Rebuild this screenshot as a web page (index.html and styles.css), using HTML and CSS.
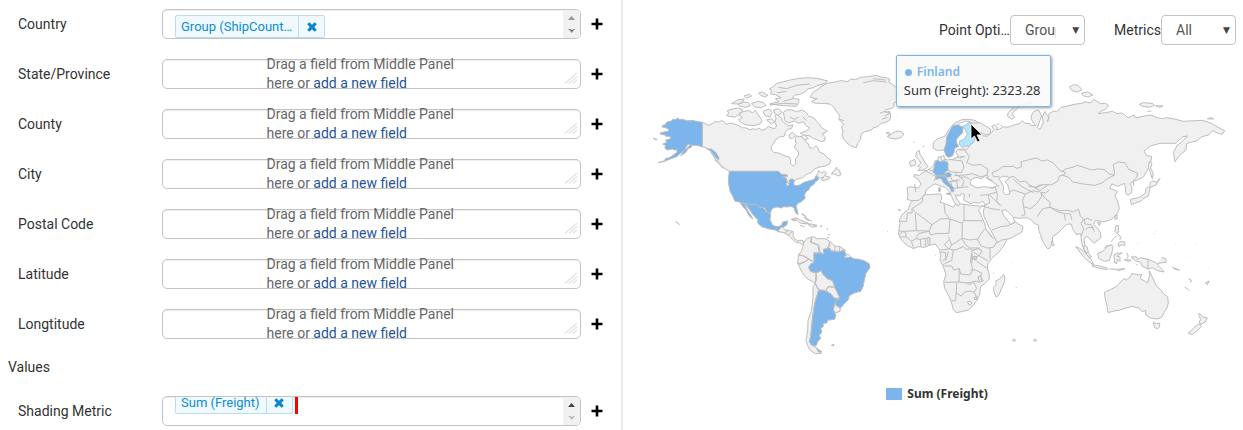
FILE: index.html
```html
<!DOCTYPE html>
<html lang="en">
<head>
<meta charset="utf-8">
<title>Map report</title>
<link rel="stylesheet" href="styles.css">
</head>
<body>
<svg class="defs" width="0" height="0" aria-hidden="true">
  <symbol id="plus" viewBox="0 0 12 12"><path d="M4.700.5h2.600v4.200h4.200v2.600H7.300v4.200H4.700V7.300H.5V4.700h4.200z"/></symbol>
  <symbol id="cross" viewBox="0 0 10 10"><path d="M2.300.3 5 2.800 7.700.3 9.800 2.300 7.200 5l2.600 2.700-2.100 2L5 7.200 2.300 9.700.2 7.700 2.800 5 .2 2.300z"/></symbol>
  <symbol id="grip" viewBox="0 0 14 13"><path d="M1 11.500 13 1M5 11.500 13 4.500M9 11.500l4-3.500" fill="none" stroke="#e2e2e2" stroke-width="1.300"/></symbol>
</svg>
<main class="layout">
  <section class="fields">
    <div class="row"><span class="name">Country</span>
      <div class="box tokens">
        <span class="token"><span class="token-text">Group (ShipCount…</span><button class="remove" aria-label="Remove"><svg><use href="#cross"/></svg></button></span>
        <span class="scroll"><svg viewBox="0 0 17 28"><path d="M5 10h7L8.500 6z" fill="#999"/><path d="M5 19h2l2 1 2-1h1l-3.500 4-1-2z" fill="#777"/></svg></span>
      </div>
      <button class="add" aria-label="Add Country"><svg><use href="#plus"/></svg></button></div>
    <div class="row"><span class="name">State/Province</span>
      <div class="box"><p class="hint">Drag a field from Middle Panel here or <a href="#">add a new field</a></p><svg class="grip"><use href="#grip"/></svg></div>
      <button class="add" aria-label="Add State/Province"><svg><use href="#plus"/></svg></button></div>
    <div class="row"><span class="name">County</span>
      <div class="box"><p class="hint">Drag a field from Middle Panel here or <a href="#">add a new field</a></p><svg class="grip"><use href="#grip"/></svg></div>
      <button class="add" aria-label="Add County"><svg><use href="#plus"/></svg></button></div>
    <div class="row"><span class="name">City</span>
      <div class="box"><p class="hint">Drag a field from Middle Panel here or <a href="#">add a new field</a></p><svg class="grip"><use href="#grip"/></svg></div>
      <button class="add" aria-label="Add City"><svg><use href="#plus"/></svg></button></div>
    <div class="row"><span class="name">Postal Code</span>
      <div class="box"><p class="hint">Drag a field from Middle Panel here or <a href="#">add a new field</a></p><svg class="grip"><use href="#grip"/></svg></div>
      <button class="add" aria-label="Add Postal Code"><svg><use href="#plus"/></svg></button></div>
    <div class="row"><span class="name">Latitude</span>
      <div class="box"><p class="hint">Drag a field from Middle Panel here or <a href="#">add a new field</a></p><svg class="grip"><use href="#grip"/></svg></div>
      <button class="add" aria-label="Add Latitude"><svg><use href="#plus"/></svg></button></div>
    <div class="row"><span class="name">Longtitude</span>
      <div class="box"><p class="hint">Drag a field from Middle Panel here or <a href="#">add a new field</a></p><svg class="grip"><use href="#grip"/></svg></div>
      <button class="add" aria-label="Add Longtitude"><svg><use href="#plus"/></svg></button></div>
    <h2 class="group">Values</h2>
    <div class="row"><span class="name">Shading Metric</span>
      <div class="box tokens scrolled">
        <span class="token"><span class="token-text">Sum (Freight)</span><button class="remove" aria-label="Remove"><svg><use href="#cross"/></svg></button></span><i class="drop-mark"></i>
        <span class="scroll"><svg viewBox="0 0 17 28"><path d="M5 10h7L8.500 6z" fill="#444"/><path d="M5 19h2l2 1 2-1h1l-3.500 4-1-2z" fill="#b5b5b5"/></svg></span>
      </div>
      <button class="add" aria-label="Add Shading Metric"><svg><use href="#plus"/></svg></button></div>
  </section>

  <section class="chart">
    <div class="toolbar">
      <div class="option"><label class="option-name" for="point">Point Option</label><span class="pick"><select id="point"><option>Group</option></select><i>▼</i></span></div>
      <div class="option"><label for="metrics">Metrics</label><span class="pick"><select id="metrics"><option>All</option></select><i>▼</i></span></div>
    </div>
    <div class="map-area">
    <svg class="map" viewBox="623 50 620 310" role="img" aria-label="World map">
      <!-- North America -->
      <g transform="translate(640 70) scale(.33333)">
        <path d="M187 157l9 4 10 5 12-6 7-5 12 1 6-4 9 3 6 8 13-4 11 3 12 4 13 7 12 1 10 5 12-3 6 3 9-5 10 7 12-5 7-7 8 4 12 3 5-9-5-9 3-12-3-9 6-7 6 9 8 5 2 9 8 7 12 8 12-3-4 10-11 3-8 9-4 12-14 2-11 8-6 12-8 9 2 10 6 7 14 2 12 5 9 4 12 3 4 8-1 11 9 8 8-7-2-15 8-8 2-10-8-12-6-5 7-10-4-12 4-11 15 2 13 5 1 12 8 5 2 10 12 3 8-8 7 8 3 11 14 6 9 10 12 9-5 11-14 7-15 2-16 6-9 11-14 5-12 10-16 4-20 13L450 345 430 322 415 304H268l-11-7-13-9-10-15-7-13-13-15-14-11-13-4z"/>
        <path class="hot" d="M187 157L170 154 155 151 140 152 128 148 119 149 113 144 106 149 96 149 91 155 83 155 77 160 79 163 68 166 66 171 77 173 86 178 86 183 62 188 60 192 75 195 77 199 90 199 92 206 81 209 76 212 81 217 68 222 78 227 74 234 82 240 98 237 104 241 110 236 111 247 99 256 88 263 76 266 74 272 55 278 74 274 91 267 112 259 121 250 134 239 144 223 151 223 142 235 131 241 122 257 135 249 147 234 154 233 155 226 172 226 187 231zM200 237l14 0 15 12 8 15-1 6-9-7-9-12-6-9z"/>
        <path class="hot" d="M268 304L415 304 425 313 438 314 444 318 430 321 439 325 441 332 440 348 447 346 448 330 456 326 463 331 461 341 464 348 479 345 492 337 508 332 523 328 528 317 534 319 535 330 526 335 522 343 511 350 507 359 497 366 493 376 496 384 486 394 474 400 468 408 472 422 474 434 467 429 462 413 453 409 443 411 431 410 425 414 412 411 399 414 393 422 391 431 380 425 374 413 361 412 350 404 325 404 303 397 284 393 279 380 271 366 267 348 265 328z"/>
        <path class="hot" d="M300 398l25 5 25 0 9 8 10 1 8 12 15 8-2 17 8 17 13 4 13-3 4-11 15-3-2 11-9 7-9 3-4 13-13-7-18-3-21-6-13-10-1-12-14-15-16-23-9-8 10 20 12 18 2 6-12-11-7-16-6-5z"/>
        <path d="M262 122l15-5 19-3 13 5-10 13-13 9-15-1-11-3 6-7zM300 128l25-7 13 8 8-9 8 14 12 17-5 10-18 6-22-2-16-6-9-10 12-6-9-6zM274 101l19-11 20-3-6 10-14 5zM295 103l16-7 13 1 7 10-15 5-18-4zM334 101l20-7 16 3 8 9-16 8-18-4zM312 78l17-5 6 5-16 7zM356 69l12-3 8 6 8 4-10 5-12-5zM372 122l16-5 9 11-7 13-13-3-7-9zM400 120l14-4 12 10-9 10-12-4zM380 150l15-4 9 10-10 6zM400 50l9-9 22-6 20-5 20-4 28-3 32 2 32 8-8 7-21 6-14 7-17 4-6 8-17 8-14 2-9 8 11 4 9 1-1 10-7 11-38-2-42-5 28-7-11-9 17-2-16-10-16-3 4-10-7-4zM430 127l10-7 14-1 15 6 18-5 13 9 6 10 14 3 10 12 8 8 7 12 17 9-6 5-10 3 10 10-3 12-8 2-15-6-10-4-13-8-19-1-7-7 19-7 9-8-13-9-5-10-15 5-13-7-18 6-10-7z"/>
        <path fill="none" d="M415 52l25 4 30-10 40-4M412 68l28-4M430 94l30-8M390 105l40-5 42 2M450 140l12 8 14-6M488 140l12 12"/>
        <path d="M484 200l10-6 11 12-13 3zM448 194l10-7 9 9-10 10-9-3zM536 302l9 7 8-5 7 5-7 8 18 5-4 4-15 6-8-2 8-9-14 4-8-9zM574 312l10-12 6-9 2 8 7 2 3 14-8 3-10-6zM40 205l12 3-5 2zM106 455l9 4 4 7M454 448l13-4 18 9 15 5 8 4-19-3-15-9zM486 431l8 4-1 8 11 8 12 1M511 462l20 4-5 4-15-2zM480 467l8 0M540 468l6 1M560 477l4 0M565 493l4 1M212 247l10 14 8 16M226 268l12 16 14 12"/>
      </g>
      <!-- Greenland and Iceland -->
      <g transform="translate(780 60) scale(.33333)">
        <path d="M92 108L100 96 111 90 123 80 141 70 161 67 183 62 203 65 212 57 226 59 243 52 263 50 288 46 303 51 318 53 330 58 326 66 338 74 346 80 374 78 361 87 369 95 353 101 358 113 352 124 340 131 343 139 333 146 318 149 316 157 329 154 332 166 330 180 317 187 304 190 293 200 279 204 273 211 254 215 244 222 241 239 233 250 229 263 214 259 201 249 192 238 186 225 189 213 184 201 192 193 183 185 176 177 180 168 171 156 162 143 152 133 135 130 108 130 94 125 112 116 92 113zM318 218l11 0 3 7 7-7 15-5 12 3 6 6-8 10-15 5-16-2-11-6 8-3z"/>
        <path fill="none" d="M250 68l30-6 40 4M280 56l36 4M300 160l14-6 16 6-16 8M306 178l16-6M178 178l14 4"/>
        <path d="M401 246l3 1M429 262l3-5M322 514l2 0M354 449l8 2"/>
      </g>
      <!-- South and Central America -->
      <g transform="translate(740 210) scale(.33333)">
        <path d="M119 56l8-6 8 10 12 1 13 4-1 12 5 10 10 6 12-3 7 7-8 7-6-5-12-3-10-8-9-11-14-8-20-5zM134 68l11-5M143 75l14-9M190 98l10-12 15-5-4 15 23 8 2 16 4 8-18 0 1 29-13-8-15-10-19-5 8-10 5-15zM215 82l8-2 6 6 26 0 13 7 2 12-8 11-12 2 2 16-12-6-3-22-24-8zM270 95l7 5 8 8 15 2 17 12-7-2-10 5-28-3-9-7zM285 108l0 16M300 110l-2 15M176 134l16 4 14 10-12 8-10 2-4 5-7-6zM172 157l8 6 14-7 12-8 17 10-11 5-6 9 6 12 16 5 2 17-4 14-26-15-14-18zM228 188l16-6 6 12 12 12 16 6 6 19-20-1-6 12-22-2-10-18zM264 230l20 2 6 12 9 14-7 8-10-2-8-11-16-12zM226 220l10 20-6 20-6 20-6 40-3 30-3 30-4 15 6 10 14 7 10 14 6 4-18 1-15-10-7-12-6-17 5-30 1-30 10-30 5-40 0-30zM282 284l10 4 9 8-1 8-12 4-8-7zM274 406l8-3-2 5z"/>
        <path class="hot" d="M222 128L230 131 240 127 252 134 250 118 262 116 270 114 272 122 285 125 300 125 311 121 318 131 316 144 330 140 342 146 357 148 372 152 388 161 390 173 378 190 373 210 370 228 362 244 345 248 328 257 325 269 311 283 302 294 291 287 282 279 296 268 300 261 296 257 290 243 284 231 278 212 262 206 250 194 244 182 228 188 212 184 206 172 212 162 222 158zM236 240L250 241 270 250 282 264 292 267 299 263 284 280 280 300 288 316 284 328 262 331 262 338 249 341 250 350 242 355 246 366 238 376 242 385 233 395 228 408 214 405 208 395 212 380 215 350 218 320 224 280 230 260zM230 414l16 12-11-1z"/>
        <path d="M312 142l12-10 8 8M156 30l15-5 22 11 8 6-21-3-8-7zM205 44l10-2 15 7-15 2zM187 50l7 0M184 13l12 4 1 6 9 6M240 49l6 0M261 56l3 1M264 72l2 4M261 84l7-2M443 63l1 1"/>
      </g>
      <!-- Africa -->
      <g transform="translate(890 180) scale(.33333)">
        <path d="M75 54L90 50 105 45 125 43 152 42 156 54 150 66 168 72 190 82 197 70 222 73 245 76 268 78 272 84 266 90 276 112 284 130 288 148 300 165 308 175 325 174 348 171 350 181 341 198 325 218 305 235 294 250 292 264 297 280 298 297 285 310 272 320 270 335 268 346 260 362 248 378 235 390 218 394 200 398 190 390 187 376 178 350 164 325 161 305 168 284 160 260 150 240 152 226 148 208 136 192 118 196 104 202 85 200 70 206 55 198 42 188 32 176 26 164 26 152 30 130 28 120 38 102 55 88 62 68zM312 335l-1-12 7-8 0-12 14-9 8-11 4 4 0 18-10 22-8 20-9 3z"/>
        <path fill="none" d="M98 50l0 15-14 9-18 12 0 13H52l-2 25H28M66 86l12 12 48 36 26-17 14-1 13 1-14-19-3-29M76 100l3 52-40 2-11 10M28 152l18 5 3 14-20 0M79 152l38 1 9-19M117 153l5 12 16-4 39-1 3-43 37 13-1 45-31 20-10-25M222 74v48l56 0M222 120l-6 10M216 175l24 5 24-3 7-13 14-18M262 177l10 20 20 7 18-2 14-20M290 150l18 22M216 176l10 18 14 10 30 0M185 195l-8 12 18 3 25-10 8 8 12-1 12 5M178 207l-27 3M177 207l-14-12 13-15M190 210l-5 32-20 8-8 8M152 217l15 0 0 15-8 12M175 215l-8 28M163 258l22 0 6 12 17-4 4 16 28 3 8-14-3-14 2-35M208 266l-1 40-44 1M207 306l23 3 10 5 15-11 13 4 12-5-10-13 6-9-19-10-16 0M241 250l5-38 18-6 12 7-8 14-17 5 9 12 33 22M252 217l22 14 20 12M300 205v32M200 309l-3 52-12 2M200 340l14 8 10-12 16-3 12 4 8-12-9-20-22 5M252 337l9 15-3 7M232 366l8-3 6 6-7 7zM252 353l6-2 2 6-6 2zM92 198l-1-20 15-3 0 24M108 175l12-3-1 24M113 174l1 21M91 178l-13-2-14 8 7 20M64 184l-15-13M78 176l8-16 30-6M246 230l14 0-1 8-13-1zM268 306l-4-15 8-5 3 18"/>
        <path d="M24 89l6 2 3-1M135 225l2 1M367 247l1 1M377 323l3 0M310 280l2 1"/>
      </g>
      <!-- Europe and Asia share one coastline -->
      <g transform="translate(960 70) scale(.33333)">
        <path d="M34 160l12-4 16 3 29 18 1 10-11 8-20-7 7 9 13 2 12-9 9-11-7-10 9-5 8 9-3 7 10-3 12-7 13 2 14-6 20-5 9-9 9 8 14 1 4 6 13 0-8-10-6-12 3-13 6-8 13-4 4 6 6 12-7 18-6 16 8 6 10-20-3-17 8-17 5 10 6 8-4 14 4-11 1-14 14-8 9 2 14-13 20-4 18-5 22-3 14-5 12 4 12-10 10 6 10 6 14-1 10 7-9 10-16 8-5 6 20-3 22-4 12 7 16-2 18 14 18-8 4 9 32-7 14-2 16 7 20 4 12-3 28 5 22 6 36-2 20-1 26 8 22 13 20 10-7 11-12-3-17-8-12 13-20 5-14 12-32 8-2 20-19 16-14 19-5-28 13-23 10-6 20-20-14 2-8 7-15 13-46 0-29 8-19 15 7 13 16 4-4 25-12 20-8 15-16 9-10 3-16 8 7 13-1 15-12 8-6-8-1-18-3-10-20 9-12-5-5-2-7 13 12 4 12 6-8 11 8 18 5 22-6 14-12 14-13 7-15 5-13-3-13-2-5 12 12 12 9 14 0 15-20 16-10-10-12-12-8 10 3 20 5 15 15 18-8 1-8-10-8-15-6-18-3-28-12 3-10-13-7-19-13 1-12 12-14 14-16 11 0 17-9 18-7 1-14-22-11-32-2-17-11-4-9-10-14-8-26 2-14-3-14-14-10-9-12 3 6 14 14 18 8 10 14-9 4 5 18 9-3 17-22 12-14 8-25 4-13 9-7-15-17-30-16-35-2-15 5-20-6-10-14 6-14-3-8 4-22-10 2-18-8-3-5 8-14-4 3 10 11 17-5 7-12-10-8-18-8-16-12-12-10-3-19-7-10 4-18 14-3 12-8 9-10 10-22 1-14-4 3-12-3-22 10-4 24 4 8-12-8-14-14-8 2-6 15 2 10-8 22-12 10-10 7-15 7 1 0-10 8-3 7 8 14 3 18-3 14-8-7-11 4-10 15-1 14 1 10-14 8-5 2-22-10-20z"/>
        <path fill="none" d="M-136 342l3 24M-75 272l0 14M-2 240l16 0 14 20-8 18 20 8 22-3 22 15-3 17-18 6-25-10-22 4-34 2M-34 268l40 5 6 18-8 17-28-2-16-8M12 258l-12 6M-10 262l24-2M-33 310l10 22 22-2M-3 318l16 16-8 20M-16 308l16 14 18-1 13 9M-50 320l16 16 25-4M-28 335l5 20 30-3M-10 330l3 26M-108 300l36 20-5 14M-96 298l24 8M10 352l15-2M82 315l3 12 10 3 8 15 15 3M115 300l12-10 33-1 11 6 14-5-2-14 24-7 24-5 13 9 18-3 17 8 21 24 16 5-2 7-16 4-4 15-20 12-14-1-20 1-15 8-16-8-14-12-16 3-17-16-12 1-12 12-10-5-12-8-15 0-5-12zM306 305l10-8 25-6 10-5 17 5 26 9 22-3 18 2 14 13 16 3-22 11-16 13-22 7-34-4-32-6-12-14-20-7M464 312l-4-28 15-8 20 2 11 20 27 12-3 12-9 10-1 16M106 352l6 22-2 20 12 12M145 368l15-8 36 12 22-10 18 4 12-10 20-14M160 328l26 22 34 18M196 372l-8 18 3 20 4 24-10 3M190 410l22 6 18-15 15-22-2-12 14 2 12-10M242 368l14 18 14 10 0 16-22 4-16 24M270 412l30 10 24-1 16 5M272 412l16 12 25 7 3 20M314 431l16 0 6 18M340 425l16-7 5 20 9 9-7 14 8 14-7 22M370 450l12-5 14 6M372 450l3 12 18 2 10 20M376 480l10-8 16 2M60 376l22-2 26-7M85 374l4 25-26 12M89 375l20 20 12 12M62 406l32 10 26 4M96 480l26-10 22-3 20-10-4-15M28 372l0 10M106 352l-14 3M205 348l25 5 16-8M225 354l15 8"/>
        <path class="sea" d="M30 343l4-15 14-6 17 4 8-7 7 6 16 9 17 13-15 6-27-3-20 4zM117 325l10-6 16 0 4 7-12 9 8 10 4 12 3 14-13 3-8-8 2-16z"/>
        <path d="M-130 246l8-5 2 13 8 10 9 18 8 7-14 11-17 2 8-10-9-4 10-9-8-11-8-8zM-152 276l16-8 4 16-16 5zM-80 218l11-11 23-8 12-19 16-20 24-11 22-1 20 4 6 7-16 0-20-6-20 8-20 15-11 24-6 26-10 14-19 2-13-8z"/>
        <path class="hot" d="M-5 165L9 172 8 188-2 198-11 208-10 218-4 229-16 235-18 248-22 257-32 262-41 259-48 240-42 222-40 200-28 178-20 166zM-75 280l7-9 9 4 13-3 10 6 0 22-10 8 5 8-18 3-13-2-9-12 3-13zM-72 320l13-6 17 8 6 14 16 16 2 12-7 2-6-13-18-14-9-14-14 3zM-48 312l15-5 8 7-9 8-16-2zM-63 352l4 2-1 12-4-3zM-42 370l14 0 0 4-10-1z"/>
        <path class="selected" d="M28 155l6 10-1 19 13 20-5 11-12 12-22 5-9-8 0-10 14-7 10-14-7-15-8-9 13-5z"/>
        <path d="M-58 262l9-6 4 12-9 5zM144 128l10-9 12-10 22-7 32-9-4 6-25 7-16 7-14 12-4 7 7 10-8 6-13-8zM328 52l12-8 14 2 12 13-14 7-16-4zM365 70l18-4 15 9-12 6-16-3zM538 103l12-5 28 2 5 6-15 6-20-3zM586 107l23 1-10 4zM562 124l12-1M742 146l14-3 5 4-15 0zM568 274l8 6-4 14 8 18-3 14-8-22-4-12zM570 339l8-6 12 4 10-12-12 20-18 8zM566 350l4 4-5 24-13 6-8 8-30 12-3-16 28-6 17-12 2-14zM467 435l5 6-7 8zM110 163l9-1M122 167l4 0M-190 140l1-1"/>
      </g>
      <!-- South-east Asia and Oceania -->
      <g transform="translate(1030 180) scale(.33333)">
        <path d="M223 337L241 329 259 320 271 307 281 296 290 299 300 292 305 281 315 282 325 285 335 283 331 296 344 303 353 309 358 290 358 272 366 290 373 304 379 318 392 329 400 341 413 351 415 369 411 384 402 398 396 411 382 417 361 414 348 405 346 391 337 395 325 384 307 379 285 385 267 391 252 393 234 398 231 379 226 357zM370 427l10 4 9-2 0 12-6 5-9-3zM508 399l10 12 14 3-6 12-14 8-4-8 4-8-6-12zM507 431l7 8-9 10-18 15-12-4 17-17zM137 200l12 5 16 12 18 22 8 14-8-3-17-14-15-18zM186 254l20 3 28 8-3 4-26-5-18-5zM163 197l8 3 4 16-7 4-7-16zM203 220l15-6 14-15 12-5 5 5-3 18-8 25-15 2-17-9zM224 204l6-7 14-1M252 225l7-5 18-1-17 9 10 3 0 14-8-8-2 14-7-3zM290 218l5 10-4 7M283 239l20 1-8 4zM303 231l16-1 4 9 8-6 22 5 25 10 10 12 12 12 2 4-19-4-16-9-13 4-17-8-5-12-16-5zM354 236v33M238 267l22 1 25-2-22 7M318 251l4 5M382 251l15-3 12-1-3-12-12-2M257 138l8-2 1 20-5 5-6-7zM262 160l12 12-5 8M265 190l8-6 12 3-1 10-8-3-10 5zM243 185l16-18M64 184l9 8-2 6-6-3zM202 126l10 2-4 9zM255 106l7 0-2 12-5-5zM428 262l20 8-14-2zM476 296l9 5-4 7M464 321l8 6 6 5M526 309l12-6-6 11zM-53 481l6-4 4 5-8 2zM10 481l6-4 4 5-8 2zM371 161l2 1M376 154l1 1M436 193l1 0M496 192l1 1M34 200l1 2M323 190l2 0M478 230l1 0M536 265l1 0"/>
      </g>
    </svg>
    <div class="tip"><div class="tip-title"><i></i>Finland</div><div>Sum (Freight): 2323.28</div></div>
    <svg class="cursor" viewBox="0 0 14 20"><path d="M1 1v15l3.500-3 3 6 2.500-1-3-6h5z" fill="#000" stroke="#fff" stroke-width=".8"/></svg>
    </div>
    <div class="legend"><i></i>Sum (Freight)</div>
  </section>
</main>
</body>
</html>
```

FILE: styles.css
```css
* { box-sizing: border-box; }
body {
  margin: 0;
  background: #fff;
  color: #333;
  font: 14px/20px Roboto, "Liberation Sans", sans-serif;
}
button { padding: 0; border: 0; background: none; cursor: pointer; }
.defs { position: absolute; }
.layout { display: grid; grid-template-columns: 623fr 620fr; overflow: hidden; }

.fields { padding: 9px 18px 4px 8px; border-right: 2px solid #e9e9e9; }
.row {
  display: grid;
  grid-template-columns: 144px 1fr 22px;
  align-items: center;
  padding-left: 10px;
  margin-bottom: 20px;
}
.row:last-child { margin-bottom: 0; }
.box {
  position: relative;
  height: 30px;
  border: 1px solid #c4c4c4;
  border-radius: 5px;
  box-shadow: inset 0 1px 1px #eee;
}
.hint {
  width: 210px;
  margin: -5px auto 0;
  color: #666;
  line-height: 19px;
}
.hint a { color: #1f5496; text-decoration: none; }
.grip { position: absolute; right: 2px; bottom: 3px; width: 14px; height: 13px; }
.add { justify-self: end; width: 12px; height: 12px; line-height: 0; }
.add svg { width: 12px; height: 12px; }

.tokens { display: flex; align-items: flex-start; padding: 5px 0 0 12px; overflow: hidden; }
.scrolled { align-items: flex-end; padding: 0 0 11px 12px; }
.token {
  display: flex;
  flex: none;
  height: 23px;
  border: 1px solid #b8def0;
  border-radius: 2px;
  background: #f0f9fd;
  color: #0e8dcf;
  font-size: 13px;
  line-height: 22px;
}
.token-text { padding: 0 6px 0 5px; }
.remove { width: 26px; border-left: 1px solid #b8def0; line-height: 0; }
.remove svg { width: 10px; height: 10px; fill: #0686cc; }
.drop-mark { width: 3px; height: 18px; margin-left: 2px; background: #f00; }
.scroll { position: absolute; top: 0; right: 0; bottom: 0; width: 17px; background: #f1f1f1; }
.scroll svg { display: block; width: 17px; height: 28px; }
.group { margin: 18px 0; font-size: 14px; font-weight: 400; line-height: 20px; }
.row + .group { margin-bottom: 19px; margin-top: -2px; padding-top: 0; }

.chart { padding: 15px 0 0; }
.toolbar { display: flex; justify-content: flex-end; gap: 29px; padding-right: 7px; }
.option { display: flex; align-items: center; }
.option-name { width: 71px; overflow: hidden; text-overflow: ellipsis; white-space: nowrap; }
.pick { position: relative; }
.pick select {
  display: block;
  width: 75px;
  height: 30px;
  padding: 0 28px 0 14px;
  border: 1px solid #c4c4c4;
  border-radius: 4px;
  background: #fff;
  color: #555;
  font: inherit;
  appearance: none;
}
.pick i {
  position: absolute;
  top: 5px;
  right: 6px;
  font: 9px/20px "DejaVu Sans", sans-serif;
  color: #444;
  pointer-events: none;
}
.map-area { position: relative; margin-top: 5px; }
.map { display: block; width: 100%; }
.map path {
  fill: #f0f0f0;
  stroke: #bdbdbd;
  stroke-width: 1px;
  stroke-linejoin: round;
  vector-effect: non-scaling-stroke;
}
.map path[fill="none"] { fill: none; }
.map .hot { fill: #7cb5ec; }
.map .selected { fill: #b0e6ff; }
.map .sea { fill: #fff; }
.tip {
  position: absolute;
  left: 44%;
  top: 5px;
  padding: 7px 9px 7px 7px;
  border: 1px solid #7cb5ec;
  border-radius: 2px;
  background: rgba(250, 250, 250, .9);
  box-shadow: 1px 1px 3px #999;
  color: #333;
  font: 13px/18px "Noto Sans", sans-serif;
  white-space: nowrap;
}
.tip-title { display: flex; align-items: center; gap: 5px; color: #7cb5ec; font-size: 12px; font-weight: 600; }
.tip-title i { width: 7px; height: 7px; margin-left: 1px; border-radius: 50%; background: #7cb5ec; }
.cursor { position: absolute; left: 56%; top: 73px; width: 14px; height: 20px; }
.legend {
  display: flex;
  justify-content: center;
  align-items: center;
  gap: 5px;
  margin: 24px 0 20px;
  padding-left: 8px;
  font: bold 12px/20px "Noto Sans", sans-serif;
}
.legend i { width: 16px; height: 12px; background: #7cb5ec; }
```
